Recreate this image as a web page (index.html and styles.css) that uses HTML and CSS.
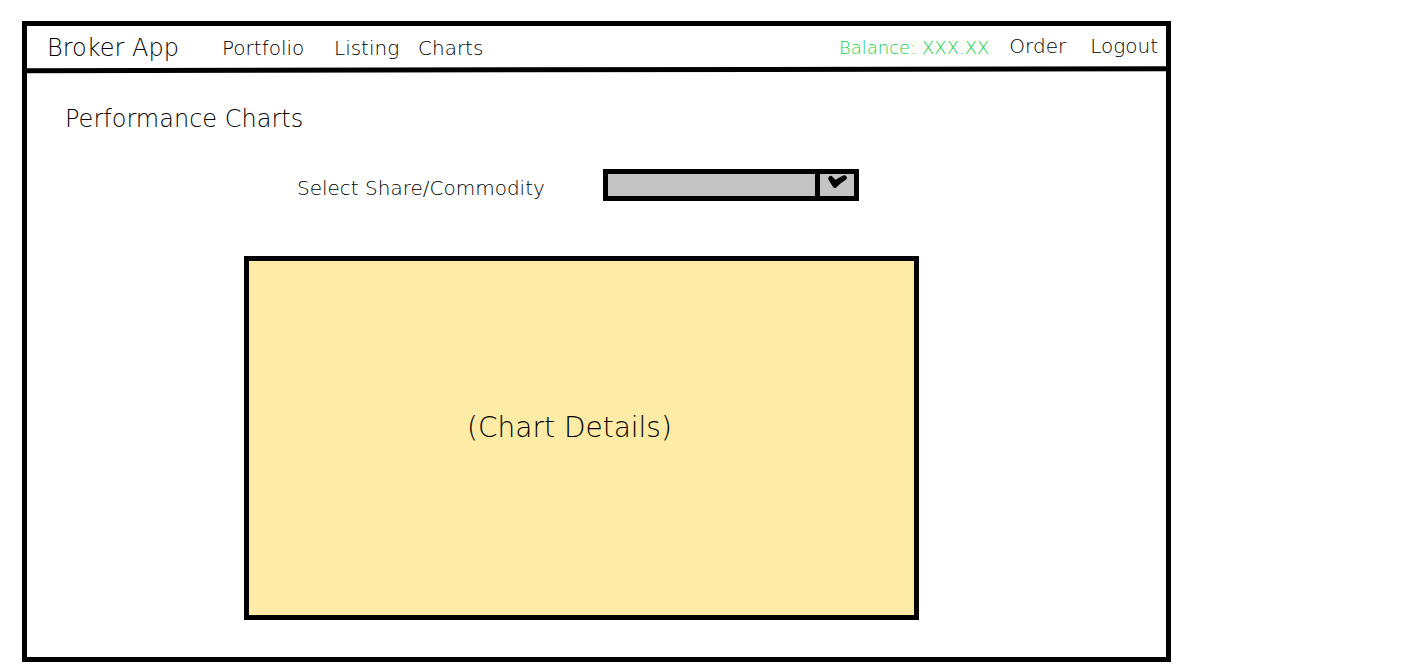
FILE: index.html
```html
<!DOCTYPE html>
<html lang="en">
<head>
<meta charset="utf-8">
<meta name="viewport" content="width=device-width, initial-scale=1">
<title>Broker App</title>
<link rel="stylesheet" href="styles.css">
</head>
<body>
<div class="frame">
  <header class="topbar">
    <a class="brand" href="#">Broker App</a>
    <nav class="nav" aria-label="Main">
      <a href="#">Portfolio</a>
      <a href="#">Listing</a>
      <a href="#">Charts</a>
    </nav>
    <span class="balance">Balance: XXX.XX</span>
    <div class="account">
      <a href="#">Order</a>
      <a href="#">Logout</a>
    </div>
  </header>
  <svg class="rule" viewBox="0 0 100 8" preserveAspectRatio="none" aria-hidden="true"><path d="M0 2.2L100 0.2V5.2L0 7.2Z"/></svg>
  <main class="main">
    <h1 class="title">Performance Charts</h1>
    <div class="picker">
      <label class="picker-label" for="share">Select Share/Commodity</label>
      <div class="select-box">
        <select class="select" id="share"><option value=""></option></select>
        <svg class="tick" viewBox="0 0 39 22" aria-hidden="true"><path class="divider" d="M2.5 0V22"/><path class="mark" d="M15.7 4.5L20 11.3Q23 7.5 29.3 3.8L20 9Z"/></svg>
      </div>
    </div>
    <section class="chart"><p class="chart-text">(Chart Details)</p></section>
  </main>
</div>
</body>
</html>
```
FILE: styles.css
```css
* { box-sizing: border-box; }
body {
  margin: 0;
  background: #fff;
  color: #000;
  font-family: "DejaVu Sans Light", "DejaVu Sans", sans-serif;
  font-weight: 200;
  font-size: 20px;
  line-height: 24px;
}
a { color: inherit; text-decoration: none; }
.frame {
  display: flex;
  flex-direction: column;
  min-height: calc(100vh - 31px);
  margin: 21px 245px 10px 22px;
  border: 5px solid #000;
}
.topbar {
  display: flex;
  align-items: center;
  height: 40px;
  padding: 4px 8px 0 20px;
  white-space: nowrap;
}
.brand { flex: 0 0 175px; font-size: 24px; }
.nav { display: grid; grid-template-columns: 112px 84px auto; }
.balance { margin-left: auto; font-size: 18px; color: #14cf4d; }
.account { display: flex; gap: 24px; margin-left: 20px; padding-bottom: 4px; }
.rule { display: block; width: 100%; height: 8px; }
.main { display: flex; flex: 1; flex-direction: column; }
.title {
  margin: 33px 0 0 38px;
  font-size: 24px;
  font-weight: 200;
  line-height: 24px;
}
.picker {
  display: flex;
  align-items: center;
  justify-content: space-between;
  margin: 38px 307px 0 270px;
}
.picker-label { padding-top: 6px; white-space: nowrap; }
.select-box { position: relative; width: 256px; height: 32px; }
.select {
  width: 100%;
  height: 100%;
  margin: 0;
  border: 5px solid #000;
  border-radius: 0;
  background: #c4c4c4;
  appearance: none;
}
.tick {
  position: absolute;
  top: 5px;
  right: 5px;
  width: 39px;
  height: 22px;
  fill: none;
  stroke: #000;
  pointer-events: none;
}
.divider { stroke-width: 5; }
.mark { stroke-width: 5; stroke-linecap: round; stroke-linejoin: round; }
.chart {
  display: flex;
  flex: 1;
  align-items: center;
  justify-content: center;
  margin: 55px 247px 37px 217px;
  padding-right: 24px;
  border: 5px solid #000;
  background: #fdeba6;
}
.chart-text { margin: 0; padding-bottom: 20px; font-size: 28px; }
```
